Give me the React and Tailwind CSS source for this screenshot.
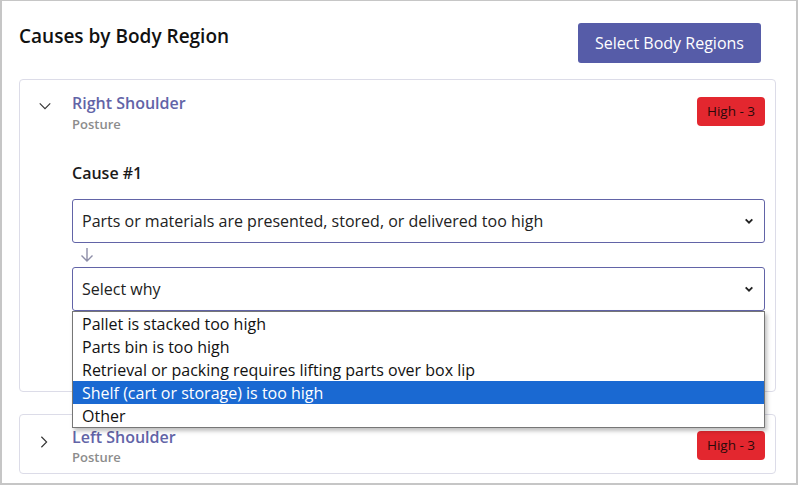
import React from "react";

const font = { fontFamily: '"Open Sans", "Noto Sans", sans-serif' };

const ChevronDown = ({ className }) => (
  <svg viewBox="0 0 16 16" className={className} fill="none" stroke="currentColor" strokeWidth="1.3">
    <path d="M2 5l6 6 6-6" />
  </svg>
);

const ChevronRight = ({ className }) => (
  <svg viewBox="0 0 16 16" className={className} fill="none" stroke="currentColor" strokeWidth="1.3">
    <path d="M5 2l6 6-6 6" />
  </svg>
);

const SelectCaret = () => (
  <svg viewBox="0 0 12 12" className="h-[10px] w-[10px] text-[#222]" fill="none" stroke="currentColor" strokeWidth="2.2">
    <path d="M2 4l4 4 4-4" />
  </svg>
);

const Badge = () => (
  <span className="flex h-[29px] w-[68px] items-center justify-center rounded-[4px] bg-[#e3272f] text-[13.5px] text-[#2b0a0a]">
    High - 3
  </span>
);

const options = [
  "Pallet is stacked too high",
  "Parts bin is too high",
  "Retrieval or packing requires lifting parts over box lip",
  "Shelf (cart or storage) is too high",
  "Other",
];

export default function App() {
  return (
    <div
      className="h-[485px] w-[798px] overflow-hidden border-x-2 border-t border-b-2 border-[#c6c6c6] bg-white pr-[20px] pl-[17px] pt-[22px]"
      style={font}
    >
      <div className="flex items-start justify-between pr-[15px]">
        <h1 className="mt-[-1px] text-[19px] font-semibold text-[#111]">Causes by Body Region</h1>
        <button className="h-[40px] w-[183px] rounded-[3px] bg-[#565ca8] text-[16px] text-white">
          Select Body Regions
        </button>
      </div>

      <div className="mt-[16px] h-[313px] rounded-[4px] border border-[#dcdce8] pt-[13px] pr-[10px]">
        <div className="flex items-start">
          <div className="flex w-[52px] justify-center pt-[6px]">
            <ChevronDown className="ml-[-2px] h-[14px] w-[14px] text-[#333]" />
          </div>
          <div className="flex-1 leading-tight">
            <div className="text-[16px] font-semibold text-[#6264a7]">Right Shoulder</div>
            <div className="mt-[3px] text-[13px] font-semibold text-[#8c8c8c]">Posture</div>
          </div>
          <div className="mt-[4px]">
            <Badge />
          </div>
        </div>

        <div className="pl-[52px]">
          <div className="mt-[29px] text-[16px] font-semibold text-[#1a1a1a]">Cause #1</div>
          <div className="mt-[14px] flex h-[44px] items-center justify-between rounded-[3px] border border-[#6264a7] pr-[10px] pl-[9px] text-[16px] text-[#222]">
            <span>Parts or materials are presented, stored, or delivered too high</span>
            <SelectCaret />
          </div>
          <div className="flex h-[24px] items-center pl-[7px]">
            <svg viewBox="0 0 16 16" className="h-[16px] w-[16px] text-[#8d8ea8]" fill="none" stroke="currentColor" strokeWidth="1.4">
              <path d="M8 1v13M2.5 8.5L8 14l5.5-5.5" />
            </svg>
          </div>
          <div className="relative">
            <div className="flex h-[44px] items-center justify-between rounded-[3px] border border-[#6264a7] pr-[10px] pl-[9px] text-[16px] text-[#222]">
              <span>Select why</span>
              <SelectCaret />
            </div>
            <div className="absolute top-[44px] left-0 z-10 w-full border border-[#767676] bg-white shadow-[2px_3px_4px_rgba(0,0,0,0.25)]">
              {options.map((o, i) => (
                <div
                  key={o}
                  className={`flex h-[23px] items-center pl-[9px] text-[16px] ${
                    i === 3 ? "bg-[#1a69d2] text-white" : "text-[#111]"
                  }`}
                >
                  {o}
                </div>
              ))}
            </div>
          </div>
        </div>
      </div>

      <div className="mt-[22px] flex h-[60px] items-start rounded-[4px] border border-[#dcdce8] pt-[12px] pr-[10px]">
        <div className="flex w-[52px] justify-center pt-[8px]">
          <ChevronRight className="ml-[-4px] h-[14px] w-[14px] text-[#333]" />
        </div>
        <div className="flex-1 leading-tight">
          <div className="text-[16px] font-semibold text-[#6264a7]">Left Shoulder</div>
          <div className="mt-[2px] text-[13px] font-semibold text-[#8c8c8c]">Posture</div>
        </div>
        <div className="mt-[4px]">
          <Badge />
        </div>
      </div>
    </div>
  );
}
